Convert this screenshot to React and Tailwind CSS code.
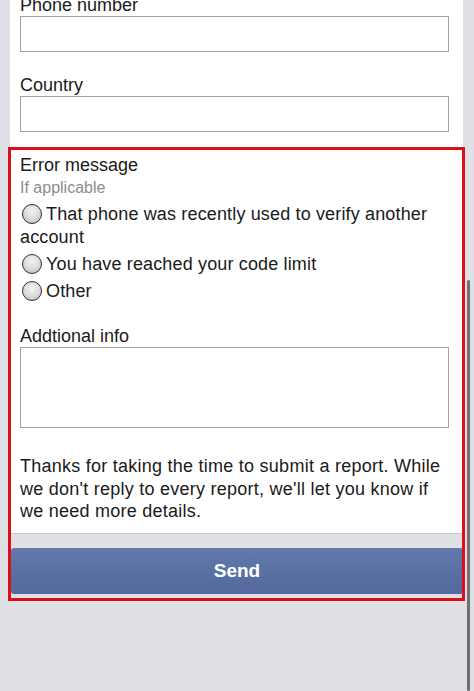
import React from "react";

const font = { fontFamily: '"Liberation Sans", Arial, sans-serif' };

function Field({ label, tall = false }) {
  return (
    <div>
      <div className="text-[18px] leading-[21px] text-[#1a1a1a]">{label}</div>
      <div
        className={`w-full border border-[#a3a3a3] bg-white ${tall ? "h-[81px]" : "h-[36px]"}`}
      />
    </div>
  );
}

function Radio({ children }) {
  return (
    <label className="block text-[18px] leading-[23px] tracking-[0.15px] text-[#1a1a1a]">
      <span className="mr-[4px] ml-[2px] inline-block h-[20px] w-[20px] rounded-full border border-[#2e2e2e] bg-[radial-gradient(circle_at_50%_35%,#f4f4f4_0%,#d6d6d6_60%,#b4b4b4_100%)] align-[-4px]" />
      {children}
    </label>
  );
}

export default function App() {
  return (
    <div
      className="relative h-[691px] w-[474px] overflow-hidden bg-[#dfe0e5]"
      style={font}
    >
      {/* report form card */}
      <div className="ml-[10px] w-[453px] border-b border-[#c9cacf] bg-white pb-[10px] pl-[10px] pr-[14px]">
        <div className="-mt-[5px]">
          <Field label="Phone number" />
        </div>
        <div className="mt-[23px]">
          <Field label="Country" />
        </div>

        <div className="mt-[23px]">
          <div className="text-[18px] leading-[21px] text-[#1a1a1a]">Error message</div>
          <div className="mt-[2px] text-[16px] leading-[20px] text-[#8d8d8d]">If applicable</div>
          <div className="mt-[5px] flex flex-col gap-[4px]">
            <Radio>That phone was recently used to verify another account</Radio>
            <Radio>You have reached your code limit</Radio>
            <Radio>Other</Radio>
          </div>
        </div>

        <div className="mt-[23px]">
          <Field label="Addtional info" tall />
        </div>

        <p className="mt-[27px] text-[18px] leading-[22.5px] tracking-[0.25px] text-[#1a1a1a]">
          Thanks for taking the time to submit a report. While we don't reply to every report,
          we'll let you know if we need more details.
        </p>
      </div>

      <div className="ml-[11px] mt-[14px] w-[452px]">
        <button className="flex h-[46px] w-full items-center justify-center rounded-[3px] bg-gradient-to-b from-[#6179ad] to-[#54699c] pt-[2px] text-[19px] font-bold text-white">
          Send
        </button>
      </div>

      {/* highlight frame */}
      <div className="pointer-events-none absolute left-[8px] top-[147px] h-[454px] w-[457px] border-[3px] border-[#dc0f18]" />

      {/* scroll indicator */}
      <div className="absolute left-[467px] top-[280px] h-[411px] w-[3px] rounded-full bg-[#6f6f73]" />
    </div>
  );
}
